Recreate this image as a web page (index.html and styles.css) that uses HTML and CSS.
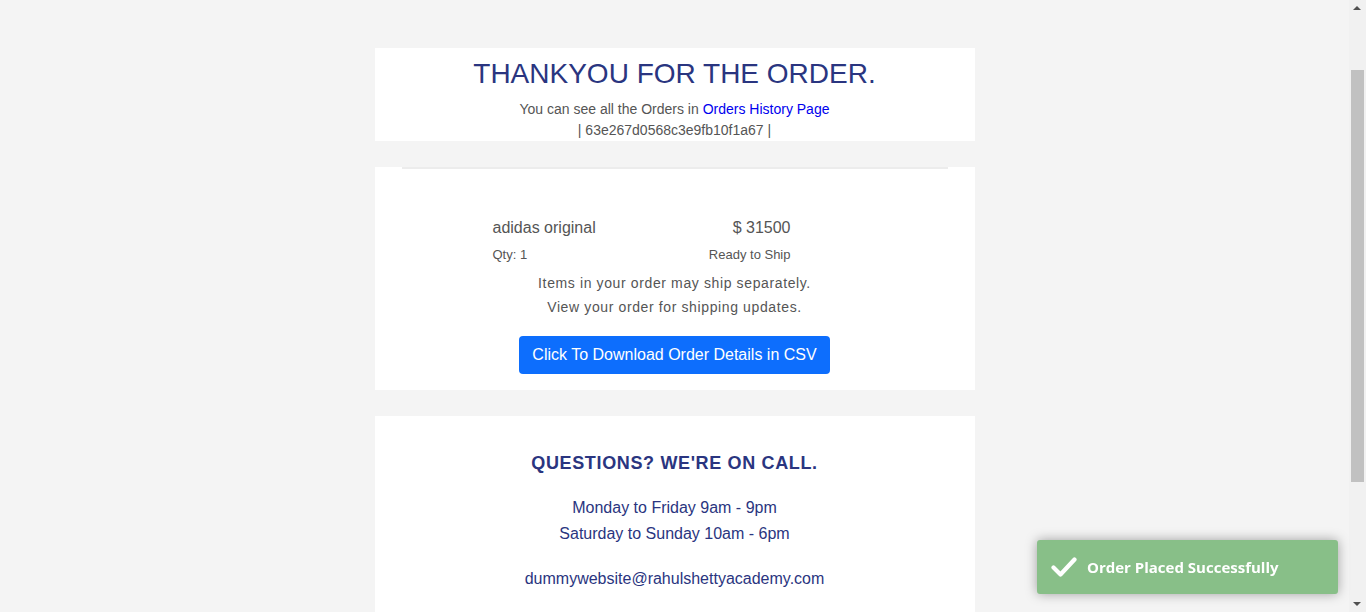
FILE: index.html
```html
<!DOCTYPE html>
<html lang="en">
<head>
<meta charset="utf-8">
<title>Thank you</title>
<link rel="stylesheet" href="styles.css">
</head>
<body>
<div class="viewport">
<div class="page">
  <section class="card head-card">
    <h1 class="title">THANKYOU FOR THE ORDER.</h1>
    <p class="sub">You can see all the Orders in <a class="link" href="#">Orders History Page</a></p>
    <p class="sub order-id">| 63e267d0568c3e9fb10f1a67 |</p>
  </section>

  <section class="card items-card">
    <div class="rule"></div>
    <div class="item">
      <div class="item-row">
        <span class="item-name">adidas original</span>
        <span class="item-price">$ 31500</span>
      </div>
      <div class="item-row small">
        <span>Qty: 1</span>
        <span>Ready to Ship</span>
      </div>
    </div>
    <p class="note">Items in your order may ship separately.<br>View your order for shipping updates.</p>
    <div class="btn-wrap"><button class="btn">Click To Download Order Details in CSV</button></div>
  </section>

  <section class="card help-card">
    <h2 class="help-title">QUESTIONS? WE'RE ON CALL.</h2>
    <p class="hours">Monday to Friday 9am - 9pm<br>Saturday to Sunday 10am - 6pm</p>
    <p class="email">dummywebsite@rahulshettyacademy.com</p>
  </section>
</div>
</div>

<div class="scrollbar">
  <span class="arrow arrow-up"></span>
  <span class="thumb"></span>
  <span class="arrow arrow-down"></span>
</div>

<div class="toast">
  <svg class="toast-icon" width="26" height="22" viewBox="0 0 26 22"><path d="M2.5 11.5 L9.5 18.5 L23.5 3.5" fill="none" stroke="#fff" stroke-width="4.2" stroke-linecap="round" stroke-linejoin="round"/></svg>
  <span class="toast-text">Order Placed Successfully</span>
</div>
</body>
</html>
```

FILE: styles.css
```css
html, body {
  height: 100%;
  overflow: hidden;
}
body {
  margin: 0;
  background: #f4f4f4;
  font-family: "Liberation Sans", Arial, sans-serif;
}
.viewport {
  width: calc(100% - 17px);
}
.page {
  width: 600px;
  margin: 0 auto;
  padding: 48px 0 120px;
}
.card {
  background: #fff;
  text-align: center;
}
.head-card {
  padding-top: 9px;
  height: 84px;
}
.title {
  margin: 0;
  font-size: 28px;
  line-height: 34px;
  font-weight: normal;
  color: #2a3580;
}
.sub {
  margin: 0;
  font-size: 14px;
  line-height: 21px;
  color: #555;
}
.head-card .sub:first-of-type {
  margin-top: 8px;
}
.link {
  color: #0000ee;
  text-decoration: none;
}
.items-card {
  margin-top: 26px;
  height: 223px;
}
.rule {
  margin: 0 27px;
  border-top: 2px solid #ececec;
}
.item {
  width: 298px;
  margin: 49px 0 0 118px;
  text-align: left;
}
.item-row {
  display: flex;
  justify-content: space-between;
  color: #555;
  font-size: 16px;
  line-height: 20px;
}
.item-row.small {
  font-size: 13px;
  line-height: 16px;
  margin-top: 9px;
}
.note {
  margin: 8px 0 0;
  font-size: 14px;
  line-height: 24px;
  letter-spacing: 0.62px;
  color: #555;
}
.btn-wrap {
  margin-top: 17px;
}
.btn {
  background: #0d6efd;
  color: #fff;
  border: 0;
  border-radius: 4px;
  height: 38px;
  padding: 0 13px;
  font-family: "Liberation Sans", Arial, sans-serif;
  font-size: 16px;
}
.help-card {
  margin-top: 26px;
  padding-top: 36px;
  height: 270px;
}
.help-title {
  margin: 0;
  font-size: 18px;
  line-height: 22px;
  font-weight: bold;
  letter-spacing: 0.65px;
  color: #2a3580;
}
.hours {
  margin: 21px 0 0;
  font-size: 16px;
  line-height: 26px;
  color: #2a3580;
}
.email {
  margin: 19px 0 0;
  font-size: 16px;
  line-height: 26px;
  color: #2a3580;
}
.scrollbar {
  position: fixed;
  top: 0;
  right: 0;
  width: 17px;
  height: 100%;
  background: #f1f1f1;
}
.thumb {
  position: absolute;
  left: 2px;
  right: 2px;
  top: 70px;
  height: 412px;
  background: #c1c1c1;
}
.arrow {
  position: absolute;
  left: 4px;
  width: 0;
  height: 0;
  border-left: 4px solid transparent;
  border-right: 4px solid transparent;
}
.arrow-up {
  top: 6px;
  border-bottom: 4px solid #505050;
}
.arrow-down {
  bottom: 6px;
  border-top: 4px solid #505050;
}
.toast {
  position: fixed;
  right: 28px;
  bottom: 18px;
  width: 301px;
  height: 54px;
  box-sizing: border-box;
  background: #88bf88;
  border-radius: 3px;
  box-shadow: 0 0 12px rgba(0, 0, 0, 0.35);
  display: flex;
  align-items: center;
  padding-left: 14px;
  color: #fff;
}
.toast-icon {
  margin-right: 10px;
}
.toast-text {
  font-family: "Open Sans", sans-serif;
  font-weight: bold;
  font-size: 15px;
}
```
